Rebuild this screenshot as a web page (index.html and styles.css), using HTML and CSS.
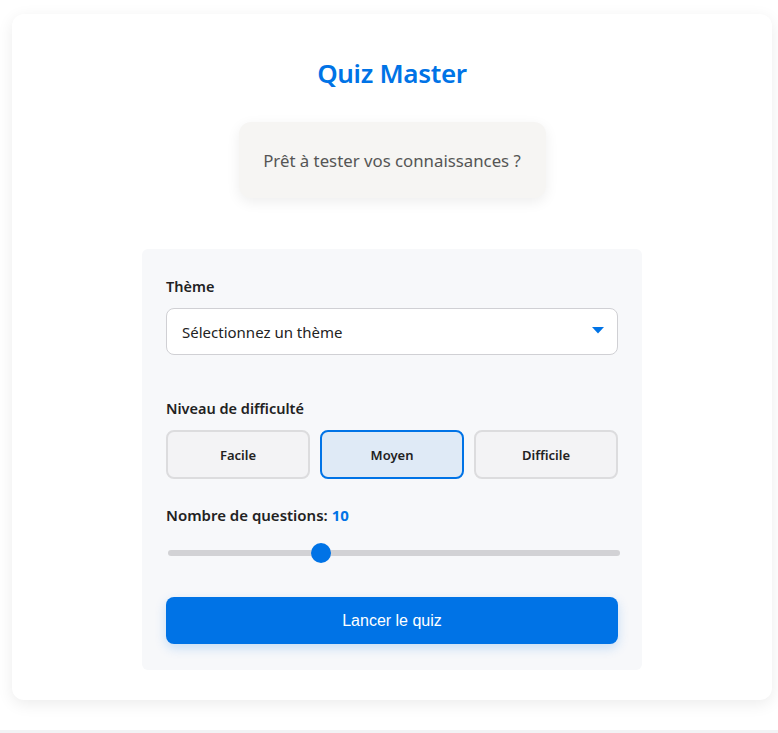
FILE: index.html
```html
<!DOCTYPE html>
<html lang="fr">
<head>
<meta charset="utf-8">
<title>Quiz Master</title>
<link rel="stylesheet" href="styles.css">
</head>
<body>
<div class="page">
  <main class="card">
    <h1 class="title">Quiz Master</h1>
    <div class="intro">Prêt à tester vos connaissances ?</div>
    <form class="panel">
      <div class="field">
        <label class="label">Thème</label>
        <div class="select">
          <span>Sélectionnez un thème</span>
          <svg class="arrow" width="12" height="7" viewBox="0 0 12 7"><path d="M0 0H12L6 6.5Z" fill="#0073e6"/></svg>
        </div>
      </div>
      <div class="field diff">
        <label class="label">Niveau de difficulté</label>
        <div class="levels">
          <button type="button" class="level">Facile</button>
          <button type="button" class="level active">Moyen</button>
          <button type="button" class="level">Difficile</button>
        </div>
      </div>
      <div class="field count">
        <label class="label">Nombre de questions: <span class="num">10</span></label>
        <div class="slider">
          <div class="track"></div>
          <div class="thumb"></div>
        </div>
      </div>
      <button type="button" class="start">Lancer le quiz</button>
    </form>
  </main>
  <div class="footer-line"></div>
</div>
</body>
</html>
```
FILE: styles.css
```css
* { box-sizing: border-box; }
html, body { margin: 0; padding: 0; background: #fff; }
body { font-family: "Noto Sans", "Open Sans", sans-serif; color: #222; }
.page { padding: 14px 6px 0 12px; }
.card {
  background: #fff;
  border-radius: 12px;
  box-shadow: 0 4px 16px rgba(0,0,0,0.08);
  height: 686px;
  padding: 43px 0 0;
  display: flex;
  flex-direction: column;
  align-items: center;
}
.title {
  margin: 0;
  font-size: 26px;
  font-weight: 600;
  line-height: 32px;
  color: #0073e6;
  letter-spacing: -0.3px;
}
.intro {
  margin-top: 33px;
  width: 307px;
  height: 76px;
  background: #f6f5f3;
  border-radius: 12px;
  box-shadow: 0 4px 14px rgba(0,0,0,0.07);
  display: flex;
  align-items: center;
  justify-content: center;
  font-size: 16.8px;
  color: #555;
}
.panel {
  margin-top: 51px;
  width: 500px;
  background: #f7f8fa;
  border-radius: 6px;
  padding: 27px 24px 26px;
}
.label {
  display: block;
  font-size: 14.5px;
  font-weight: 600;
  line-height: 20px;
  color: #222;
}
.count .label { font-size: 15px; }
.select {
  margin-top: 12px;
  height: 47px;
  background: #fff;
  border: 1px solid #d0d0d4;
  border-radius: 8px;
  display: flex;
  align-items: center;
  justify-content: space-between;
  padding: 0 13px 0 15px;
  font-size: 15px;
  color: #222;
}
.arrow { margin-top: -3px; }
.diff { margin-top: 43px; }
.levels {
  margin-top: 12px;
  display: grid;
  grid-template-columns: repeat(3, 1fr);
  gap: 10px;
}
.level {
  height: 49px;
  border: 2px solid #dcdcde;
  background: #f3f3f5;
  border-radius: 8px;
  font-family: "Noto Sans", "Open Sans", sans-serif;
  font-size: 13px;
  font-weight: 600;
  color: #222;
}
.level.active {
  border-color: #0073e6;
  background: #dfeaf6;
}
.count { margin-top: 26px; }
.num { color: #0073e6; font-weight: 700; }
.slider {
  position: relative;
  margin-top: 18px;
  height: 20px;
  display: flex;
  align-items: center;
}
.track {
  width: 100%;
  height: 6px;
  margin: 0 -2px 0 2px;
  background: #d2d2d5;
  border-radius: 3px;
}
.thumb {
  position: absolute;
  left: 145px;
  top: 0;
  width: 20px;
  height: 20px;
  border-radius: 50%;
  background: #0073e6;
}
.start {
  margin-top: 34px;
  width: 100%;
  height: 47px;
  border: none;
  border-radius: 8px;
  background: #0073e6;
  color: #fff;
  font-family: "Liberation Sans", Arial, sans-serif;
  font-size: 16px;
  box-shadow: 0 4px 12px rgba(0,115,230,0.2);
}
.footer-line {
  margin: 30px -6px 0 -12px;
  height: 3px;
  background: #f2f3f5;
}
```
